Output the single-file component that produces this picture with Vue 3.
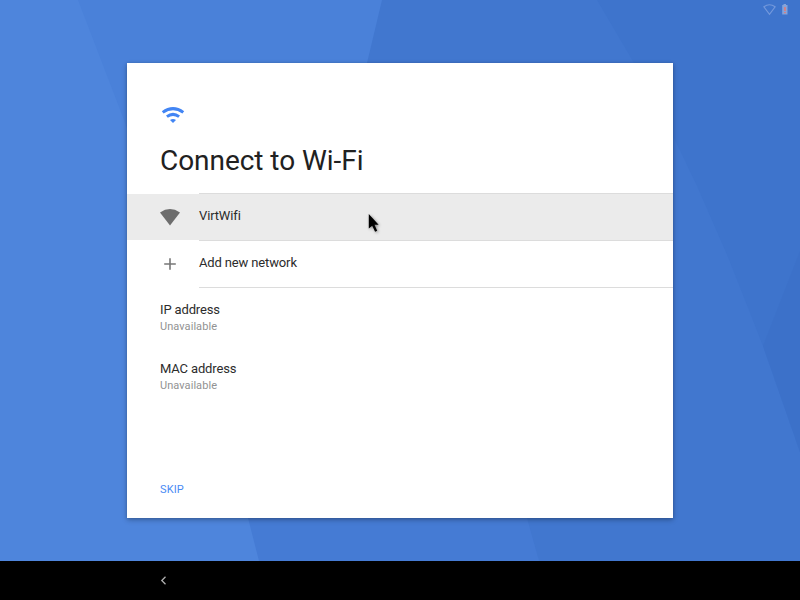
<script setup>
const details = [
  { label: 'IP address', value: 'Unavailable' },
  { label: 'MAC address', value: 'Unavailable' },
]
</script>

<template>
  <div class="screen">
    <svg class="wallpaper" viewBox="0 0 800 561" aria-hidden="true">
      <rect width="800" height="561" fill="#4e85dc" />
      <path d="M78 0H400V300H190L124 120Z" fill="#4a81d9" />
      <path d="M190 300H500L539 561H259L248 518Z" fill="#457bd4" />
      <path d="M382 0H800V561H539L527 518L350 170L367 63Z" fill="#4177cf" />
      <path d="M597 0H800V452L763 346L728 257L697 186L674 138L634 63Z" fill="#3e74cc" />
      <path d="M800 251V452L763 346Z" fill="#3c71c9" />
    </svg>
    <main class="stage">
      <div class="status">
        <svg width="13" height="12" viewBox="0 0 13 12">
          <path d="M.9 2.8Q6.5 -1.2 12.1 2.8L6.5 10.3Z" fill="none" stroke="#7499dc" stroke-width="1.1" />
        </svg>
        <svg width="6" height="11" viewBox="0 0 6 11">
          <path d="M1.5 0H4V1H5.5V10.6H0.2V1H1.5Z" fill="#84a3da" />
          <path d="M2.1 3H3.9V7H2.1ZM2.1 8H3.9V9.3H2.1Z" fill="#d77f83" />
        </svg>
      </div>
      <section class="card">
        <header class="head">
          <svg class="signal" width="24" height="18" viewBox="0 0 24 18" fill="none" stroke="#4285f4" stroke-width="3">
            <path d="M1.7 6.4Q12 -1.2 22.3 6.4" />
            <path d="M5.9 10.6Q12 6.1 18.1 10.6" />
            <path d="M9 14Q12 12 15 14L12 17Z" fill="#4285f4" stroke="none" />
          </svg>
          <h1>Connect to Wi-Fi</h1>
        </header>
        <div class="row selected">
          <span class="row-icon">
            <svg width="20" height="17" viewBox="0 0 20 17"><path d="M0 3.5Q10 -3.4 20 3.5L10 16.5Z" fill="#6d6d6d" /></svg>
          </span>
          <span class="row-text">VirtWifi</span>
        </div>
        <div class="row">
          <span class="row-icon">
            <svg width="20" height="14" viewBox="0 0 20 14"><path d="M10 1.3V12.7M4.2 7H15.8" stroke="#777" stroke-width="1.6" /></svg>
          </span>
          <span class="row-text">Add new network</span>
        </div>
        <div class="details">
          <div v-for="d in details" :key="d.label" class="detail">
            <div class="label">{{ d.label }}</div>
            <div class="value">{{ d.value }}</div>
          </div>
        </div>
        <button class="skip">SKIP</button>
      </section>
    </main>
    <nav class="navbar">
      <svg width="7" height="9" viewBox="0 0 7 9"><path d="M5.5 .8L1.8 4.5L5.5 8.2" fill="none" stroke="#b0b0b0" stroke-width="1.3" /></svg>
    </nav>
    <svg class="cursor" width="18" height="24" viewBox="0 0 18 24">
      <path d="M1.8 2V16.6L5.2 13.7L8.1 19.8L10.2 18.8L7.5 12.8H11.6Z" fill="#000" />
    </svg>
  </div>
</template>

<style>
body { margin: 0; overflow: hidden; }
</style>

<style scoped>
.screen {
  position: relative;
  display: flex;
  flex-direction: column;
  width: 800px;
  height: 600px;
  overflow: hidden;
  background: #000;
  font-family: Roboto, sans-serif;
  color: #212121;
}
.wallpaper { position: absolute; top: 0; left: 0; width: 800px; height: 561px; }
.stage { position: relative; flex: 1; display: flex; flex-direction: column; align-items: center; }
.status {
  box-sizing: border-box;
  width: 100%;
  height: 63px;
  padding: 4px 12px 0 0;
  display: flex;
  justify-content: flex-end;
  align-items: flex-start;
  gap: 6px;
}
.card {
  box-sizing: border-box;
  width: 546px;
  height: 455px;
  background: #fff;
  display: flex;
  flex-direction: column;
  box-shadow: 0 2px 5px rgba(0, 0, 0, .28), 0 0 3px rgba(0, 0, 0, .12);
}
.head { height: 130px; padding: 0 33px; }
.signal { display: block; margin: 43px 0 0 1px; }
h1 { margin: 20px 0 0; font-size: 28px; line-height: 33px; font-weight: 400; letter-spacing: -.05px; }
.row { height: 47px; display: flex; background: linear-gradient(#dcdcdc, #dcdcdc) 72px 0 / 474px 1px no-repeat; }
.selected { background: linear-gradient(#dcdcdc, #dcdcdc) 72px 0 / 474px 1px no-repeat, linear-gradient(#ebebeb, #ebebeb) 0 1px / 100% 46px no-repeat; }
.row-icon { width: 39px; height: 47px; margin-left: 33px; display: flex; align-items: center; }
.row-icon svg { margin-top: 1px; }
.row-text { line-height: 15px; margin-top: 15px; font-size: 13px; letter-spacing: -.14px; color: #2c2c2c; }
.details {
  flex: 1;
  padding: 15px 33px 0;
  background: linear-gradient(#dcdcdc, #dcdcdc) 72px 0 / 474px 1px no-repeat;
}
.detail { height: 59px; }
.label { font-size: 13px; line-height: 15px; letter-spacing: -.14px; color: #2c2c2c; }
.value { font-size: 11px; line-height: 13px; margin-top: 3px; letter-spacing: .06px; color: #929292; }
.skip {
  align-self: flex-start;
  margin: 0 0 22px 33px;
  padding: 0;
  border: 0;
  background: none;
  font: 400 11px/13px Roboto, sans-serif;
  letter-spacing: .1px;
  color: #4a8af4;
}
.navbar { position: relative; height: 39px; background: #000; display: flex; align-items: center; padding-left: 160px; }
.cursor { position: absolute; left: 367px; top: 212px; filter: drop-shadow(1px 1px 1.5px rgba(0, 0, 0, .45)); }
</style>
